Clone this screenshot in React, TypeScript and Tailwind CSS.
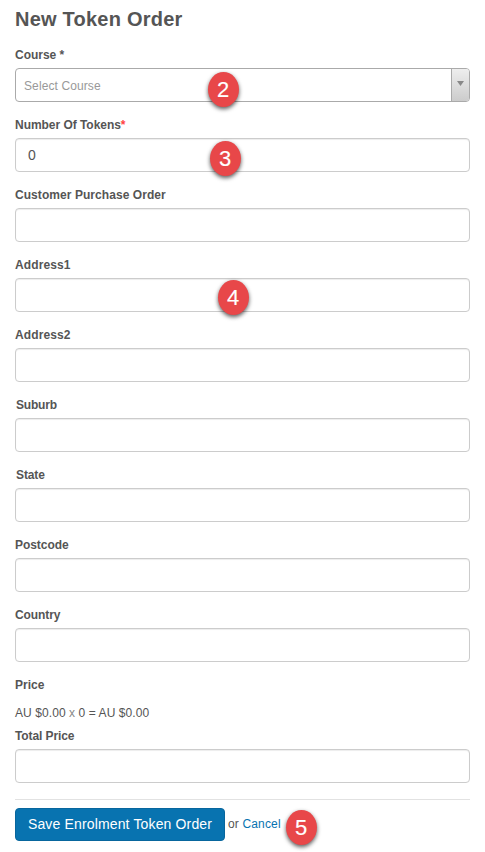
import type { ReactNode } from "react";

function Badge({ n, place }: { n: number; place: string }) {
  return (
    <span
      className={`absolute z-10 flex h-[35px] w-[31px] items-center justify-center rounded-[50%] bg-[#e84749] pr-px text-[22px] leading-none text-white shadow-[0_2px_4px_rgba(0,0,0,0.65)] [-webkit-text-stroke:0.15px_white] ${place}`}
    >
      {n}
    </span>
  );
}

function Field({ label, spacing, children, badge }: { label: ReactNode; spacing: string; children?: ReactNode; badge?: ReactNode }) {
  return (
    <div className="relative h-[70px]">
      <label className={`block h-6 pt-px text-xs leading-[21px] font-bold whitespace-nowrap ${spacing}`}>{label}</label>
      {children ?? <Box />}
      {badge}
    </div>
  );
}

function Box({ value }: { value?: string }) {
  return (
    <div className="flex h-[34px] items-center rounded-[4px] border border-[#ccc] bg-white px-3 text-sm shadow-[inset_0_1px_1px_rgba(0,0,0,0.075)]">
      {value}
    </div>
  );
}

export default function App() {
  return (
    <main className="h-[852px] w-[485px] overflow-hidden bg-white px-[15px] font-['Liberation_Sans',Arial,sans-serif] text-xs text-[#555]">
      <h1 className="h-11 pt-[5px] text-xl leading-7 font-bold tracking-[0.23px] whitespace-nowrap">New Token Order</h1>
      <Field label="Course *" spacing="tracking-[-0.03px]" badge={<Badge n={2} place="top-[28px] left-[193px]" />}>
        <div className="flex h-[34px] overflow-hidden rounded-[4px] border border-[#aaa] bg-white">
          <span className="flex flex-1 items-center pt-px pl-2 tracking-[0.1px] text-[#999]">Select Course</span>
          <span className="flex w-[18px] items-start justify-center border-l border-[#aaa] bg-linear-to-b from-[#eee] to-[#ccc] pt-[12px]">
            <svg width="7" height="5" viewBox="0 0 7 5" fill="#888">
              <path d="M0 0h7L3.5 5z" />
            </svg>
          </span>
        </div>
      </Field>
      <Field
        label={<>Number Of Tokens<span className="text-[#f44]">*</span></>}
        spacing="tracking-[-0.04px]"
        badge={<Badge n={3} place="top-[27px] left-[195px]" />}
      >
        <Box value="0" />
      </Field>
      <Field label="Customer Purchase Order" spacing="tracking-[0.06px]" />
      <Field label="Address1" spacing="tracking-[0.1px]" badge={<Badge n={4} place="top-[26px] left-[203px]" />} />
      <Field label="Address2" spacing="tracking-[0.1px]" />
      <Field label="Suburb" spacing="pl-px tracking-[-0.2px]" />
      <Field label="State" spacing="pl-px tracking-[-0.1px]" />
      <Field label="Postcode" spacing="tracking-[-0.05px]" />
      <Field label="Country" spacing="tracking-[-0.1px]" />
      <div className="h-[51px] pt-px">
        <div className="h-7 leading-[21px] font-bold">Price</div>
        <div className="leading-[21px] tracking-[0.08px]">AU $0.00 <span className="text-[#888]">x</span> 0 = AU $0.00</div>
      </div>
      <div className="h-6 pt-px leading-[21px] font-bold tracking-[-0.1px]">Total Price</div>
      <Box />
      <hr className="mt-4 mb-2 border-t border-[#e2e2e2]" />
      <div className="relative flex items-center">
        <button className="h-[33px] w-[210px] rounded-[4px] border border-[#08669d] bg-[#0873b0] pb-px text-sm tracking-[0.15px] whitespace-nowrap text-white">
          Save Enrolment Token Order
        </button>
        <span className="ml-[3px] pb-0.5 tracking-[0.15px] whitespace-nowrap">
          or <a className="text-[#0873b0]">Cancel</a>
        </span>
        <Badge n={5} place="top-[2px] left-[271px]" />
      </div>
    </main>
  );
}
